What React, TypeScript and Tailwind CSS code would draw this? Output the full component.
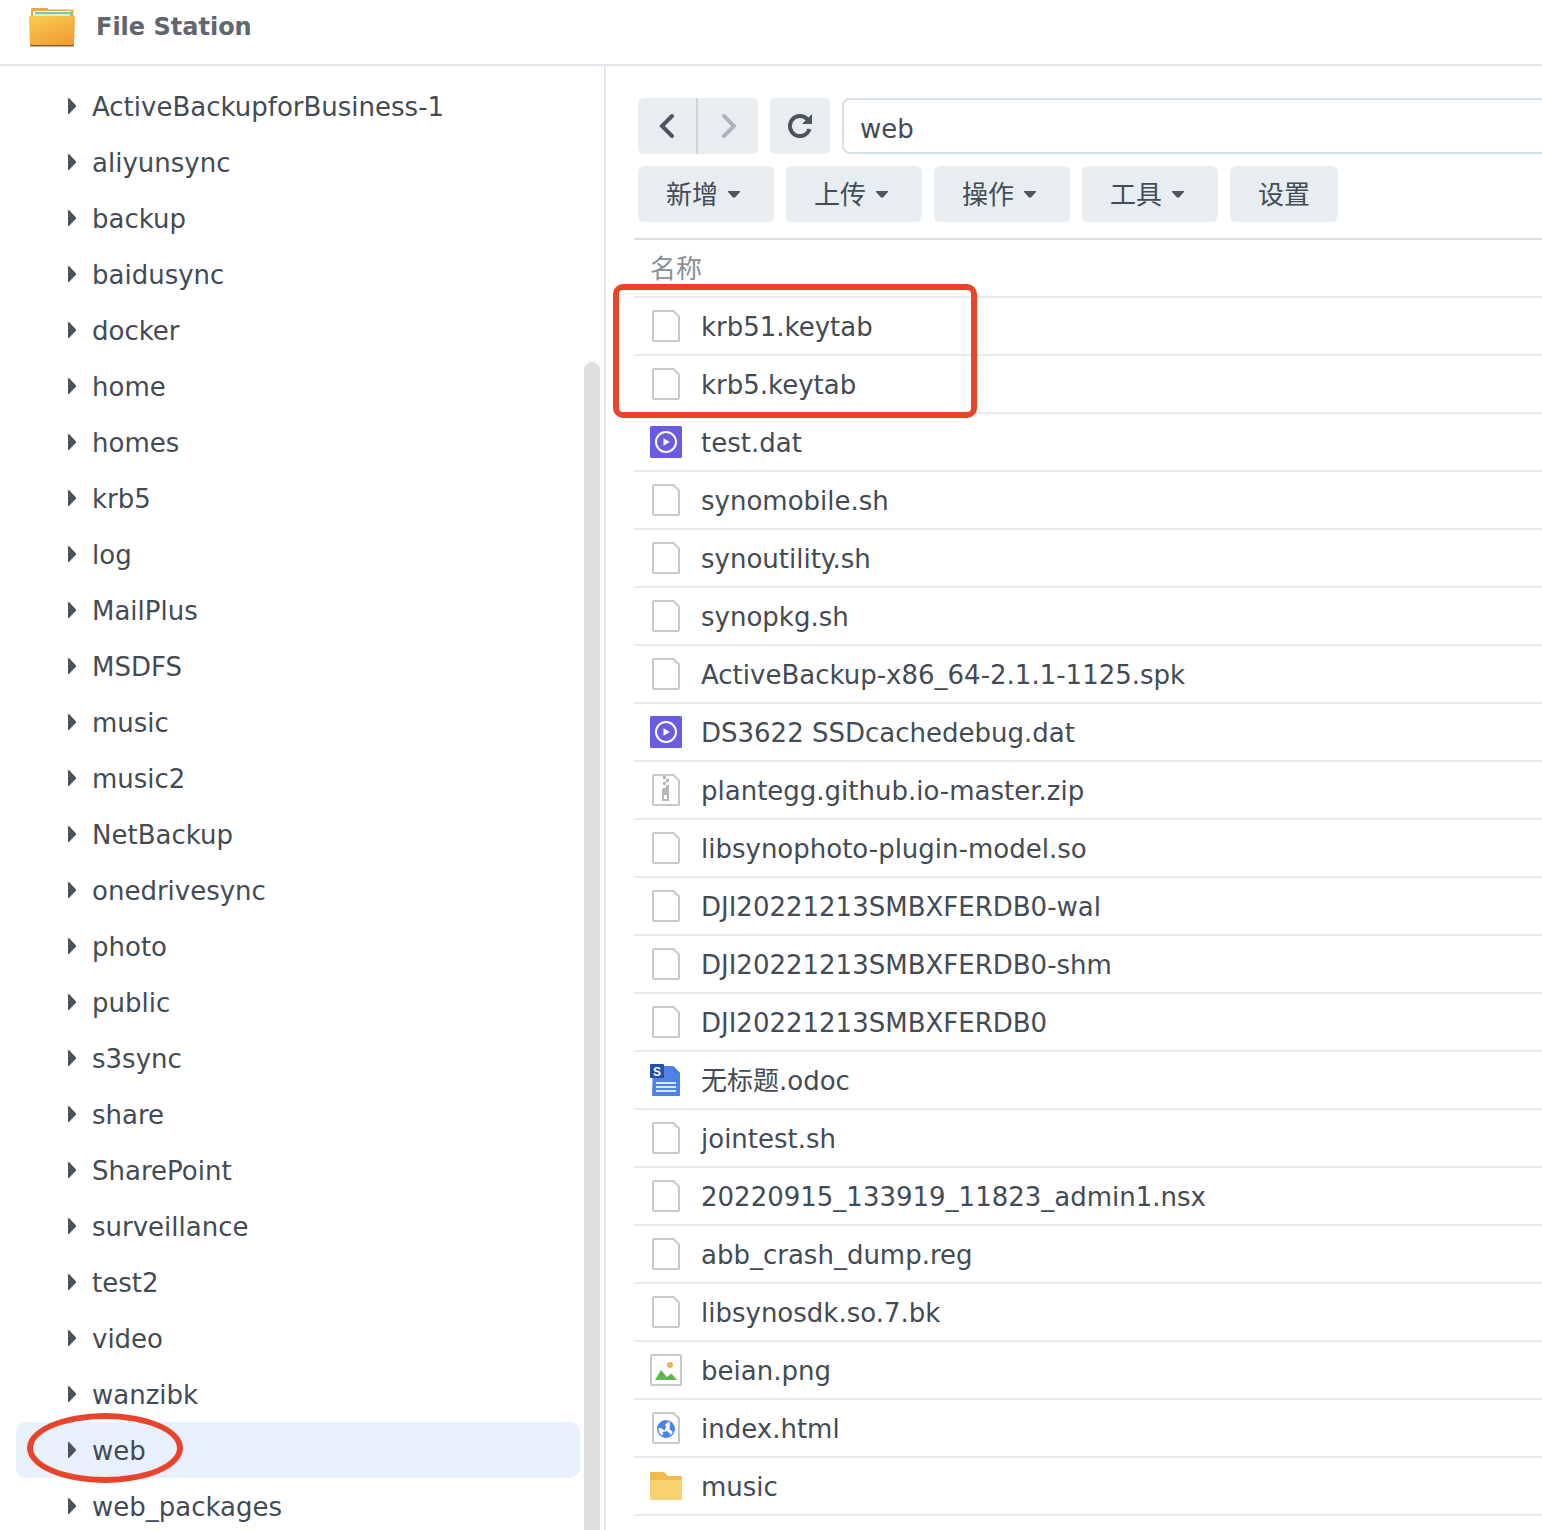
import type { ReactNode } from "react"

type IconKind = "file" | "media" | "zip" | "doc" | "image" | "html" | "folder"

const folders = [
  "ActiveBackupforBusiness-1",
  "aliyunsync",
  "backup",
  "baidusync",
  "docker",
  "home",
  "homes",
  "krb5",
  "log",
  "MailPlus",
  "MSDFS",
  "music",
  "music2",
  "NetBackup",
  "onedrivesync",
  "photo",
  "public",
  "s3sync",
  "share",
  "SharePoint",
  "surveillance",
  "test2",
  "video",
  "wanzibk",
  "web",
  "web_packages",
]

const files: { name: string; icon: IconKind }[] = [
  { name: "krb51.keytab", icon: "file" },
  { name: "krb5.keytab", icon: "file" },
  { name: "test.dat", icon: "media" },
  { name: "synomobile.sh", icon: "file" },
  { name: "synoutility.sh", icon: "file" },
  { name: "synopkg.sh", icon: "file" },
  { name: "ActiveBackup-x86_64-2.1.1-1125.spk", icon: "file" },
  { name: "DS3622 SSDcachedebug.dat", icon: "media" },
  { name: "plantegg.github.io-master.zip", icon: "zip" },
  { name: "libsynophoto-plugin-model.so", icon: "file" },
  { name: "DJI20221213SMBXFERDB0-wal", icon: "file" },
  { name: "DJI20221213SMBXFERDB0-shm", icon: "file" },
  { name: "DJI20221213SMBXFERDB0", icon: "file" },
  { name: "无标题.odoc", icon: "doc" },
  { name: "jointest.sh", icon: "file" },
  { name: "20220915_133919_11823_admin1.nsx", icon: "file" },
  { name: "abb_crash_dump.reg", icon: "file" },
  { name: "libsynosdk.so.7.bk", icon: "file" },
  { name: "beian.png", icon: "image" },
  { name: "index.html", icon: "html" },
  { name: "music", icon: "folder" },
]

const menus = ["新增", "上传", "操作", "工具"]

function Page() {
  return (
    <path
      d="M4 1h19.500L29 6.500V30a1 1 0 0 1-1 1H4a1 1 0 0 1-1-1V2a1 1 0 0 1 1-1z"
      fill="#fff"
      stroke="#c6c8cc"
      strokeWidth="2"
    />
  )
}

const iconShapes: Record<IconKind, ReactNode> = {
  file: <Page />,
  media: (
    <>
      <rect width="32" height="32" rx="1.500" fill="#6a5ce2" />
      <circle cx="16" cy="16" r="10" fill="none" stroke="#fff" strokeWidth="2" />
      <path d="M13.500 12.200v7.600l6.300-3.800z" fill="#fff" />
    </>
  ),
  zip: (
    <>
      <Page />
      <path d="M13 2h3v3h-3zM16 5h3v3h-3zM13 8h3v3h-3zM16 11h3v3h-3z" fill="#b3b6ba" />
      <path d="M12 16a2 2 0 0 1 2-2h5v13h-7zM14 21v4h3v-4z" fill="#b3b6ba" fillRule="evenodd" />
    </>
  ),
  doc: (
    <>
      <path d="M3 2h20l7 7v22a1 1 0 0 1-1 1H3a1 1 0 0 1-1-1z" fill="#4f83e8" />
      <path d="M23 2l7 7h-6a1 1 0 0 1-1-1z" fill="#447ae2" />
      <path d="M6 19h20M6 23h20M6 27h20" stroke="#dbe7fb" strokeWidth="2" />
      <rect width="14" height="14" rx="1" fill="#2450a6" />
      <text x="7" y="11.500" fontSize="12" fontWeight="700" fill="#fff" textAnchor="middle" className="font-['Liberation_Sans',sans-serif]">
        S
      </text>
    </>
  ),
  image: (
    <>
      <rect x="1" y="1" width="30" height="30" rx="1" fill="#fff" stroke="#c6c8cc" strokeWidth="2" />
      <circle cx="20" cy="11" r="3" fill="#f0b04a" />
      <path d="M5 26l6-10 6 7 4.500-3.500L27 26z" fill="#5fb74e" />
    </>
  ),
  html: (
    <>
      <Page />
      <circle cx="16" cy="17" r="8.300" fill="#fff" stroke="#4a82ee" strokeWidth="1.400" />
      <path d="M8 16c0-4.500 4-7.600 8-7.600l2 1.600-3 3 1 2-1.500 3.500L11 16z" fill="#4a82ee" />
      <path d="M20 10l3 2c1.500 3 1.500 6 0 8.500L19.500 17z" fill="#4a82ee" />
      <path d="M13 20l4-1 3.500 3-1.500 2.500c-2 1-4.500 1-6.500 0z" fill="#4a82ee" />
    </>
  ),
  folder: (
    <>
      <path d="M1 2h13l4 4h13a1 1 0 0 1 1 1v6H0V3a1 1 0 0 1 1-1z" fill="#f0bb50" />
      <path d="M0 10h32v19a1 1 0 0 1-1 1H1a1 1 0 0 1-1-1z" fill="#f8d270" />
    </>
  ),
}

function FileIcon({ kind }: { kind: IconKind }) {
  return (
    <svg viewBox="0 0 32 32" className="size-8 shrink-0" aria-hidden="true">
      {iconShapes[kind]}
    </svg>
  )
}

function AppLogo() {
  return (
    <svg viewBox="0 0 48 42" className="h-[42px] w-12" aria-hidden="true">
      <defs>
        <linearGradient id="front" x1="0" y1="0" x2="0.600" y2="1">
          <stop offset="0" stopColor="#f7cd50" />
          <stop offset="1" stopColor="#f2a035" />
        </linearGradient>
      </defs>
      <path d="M3 12V3.500A1.500 1.500 0 0 1 4.500 2H19l2 1.500h23A1.500 1.500 0 0 1 45.500 5v7z" fill="#eda63a" />
      <path d="M5 5h38v6H5z" fill="#fff" />
      <path d="M7 6h36v5H7z" fill="#7fc79a" />
      <path d="M6 8h36v3H6z" fill="#d5eedb" />
      <path d="M2 36h44v3a1.500 1.500 0 0 1-1.500 1.500h-41A1.500 1.500 0 0 1 2 39z" fill="#8a5a2a" />
      <path d="M2.500 10h43A1.500 1.500 0 0 1 47 11.500L46 37.500a1.500 1.500 0 0 1-1.500 1.500h-41A1.500 1.500 0 0 1 2 37.500L1 11.500A1.500 1.500 0 0 1 2.500 10z" fill="url(#front)" />
    </svg>
  )
}

function Sidebar() {
  return (
    <nav className="flex w-[606px] shrink-0 border-r-2 border-[#e1e6ec] pr-1 pl-4">
      <ul className="flex-1 pt-3">
        {folders.map((name) => (
          <li key={name} className="relative">
            <button
              className={
                name === "web"
                  ? "flex h-14 w-full items-center gap-4 rounded-[10px] bg-[#e8f1fb] pl-[51px] text-left"
                  : "flex h-14 w-full items-center gap-4 pl-[51px] text-left"
              }
            >
              <svg viewBox="0 0 9 16" className="h-4 w-[9px]" aria-hidden="true">
                <path d="M1 0h1l7 7.500v1L2 16H1z" fill="#4a525c" />
              </svg>
              <span className="pt-0.5">{name}</span>
            </button>
            {name === "web" && (
              <div className="pointer-events-none absolute -top-[9px] left-[11px] h-[70px] w-[156px] rounded-[50%] border-6 border-[#e8432b]" />
            )}
          </li>
        ))}
      </ul>
      <div className="mt-[296px] ml-1 w-4 rounded-t-full bg-[#dfdfdf]" />
    </nav>
  )
}

function Toolbar() {
  return (
    <div className="space-y-3 pb-4 pl-1">
      <div className="flex gap-3">
        <div className="flex overflow-hidden rounded-md bg-[#e8edf2]">
          <button aria-label="Back" className="flex h-14 w-[60px] items-center justify-center border-r-2 border-[#cbd5e0]">
            <svg viewBox="0 0 16 26" className="h-[26px] w-4" fill="none" stroke="#4c545e" strokeWidth="4">
              <path d="M13 3L3 13l10 10" strokeLinecap="round" />
            </svg>
          </button>
          <button aria-label="Forward" className="flex h-14 w-[60px] items-center justify-center">
            <svg viewBox="0 0 16 26" className="h-[26px] w-4" fill="none" stroke="#adb3ba" strokeWidth="4">
              <path d="M4 3l10 10L4 23" strokeLinecap="round" />
            </svg>
          </button>
        </div>
        <button aria-label="Refresh" className="flex h-14 w-[60px] items-center justify-center rounded-md bg-[#e8edf2]">
          <svg viewBox="0 0 24 24" className="size-6">
            <path d="M19.500 5.500A10 10 0 1 0 21.500 15" fill="none" stroke="#4c545e" strokeWidth="4" />
            <path d="M24 0v10H14z" fill="#4c545e" />
          </svg>
        </button>
        <input
          aria-label="Path"
          defaultValue="web"
          className="h-14 min-w-0 flex-1 rounded-l-lg border-2 border-r-0 border-[#d8e0e8] px-4 pt-1.5 outline-none"
        />
      </div>
      <div className="flex gap-3">
        {menus.map((label) => (
          <button key={label} className="flex h-14 items-center gap-2.5 rounded-md bg-[#e8edf2] px-7">
            <span className="pt-0.5">{label}</span>
            <svg viewBox="0 0 12 7" className="mr-1.5 h-[7px] w-3" aria-hidden="true">
              <path d="M0 0h12v1L7 6.500H5L0 1z" fill="#4c545e" />
            </svg>
          </button>
        ))}
        <button className="h-14 rounded-md bg-[#e8edf2] px-7 pt-0.5">设置</button>
      </div>
    </div>
  )
}

function FileTable() {
  return (
    <div className="relative border-t-2 border-[#d8e0e6]">
      <table className="w-full border-separate border-spacing-0">
        <thead>
          <tr>
            <th className="h-[58px] border-b-2 border-[#e6ebf0] p-0 pt-0.5 pl-4 text-left font-normal text-[#8b9096]">
              名称
            </th>
          </tr>
        </thead>
        <tbody>
          {files.map((file) => (
            <tr key={file.name}>
              <td className="h-[58px] border-b-2 border-[#e6ebf0] p-0 pl-4">
                <div className="flex items-center gap-[19px]">
                  <FileIcon kind={file.icon} />
                  <span className="pt-0.5 whitespace-nowrap">{file.name}</span>
                </div>
              </td>
            </tr>
          ))}
        </tbody>
      </table>
      <div className="pointer-events-none absolute top-11 -left-[21px] h-[134px] w-[364px] rounded-[10px] border-6 border-[#e8432b]" />
    </div>
  )
}

export default function App() {
  return (
    <div className="flex h-screen flex-col overflow-hidden bg-white font-['DejaVu_Sans','Noto_Sans_CJK_SC',sans-serif] text-[26px] leading-8 text-[#434b55]">
      <header className="flex h-[66px] shrink-0 items-start gap-5 border-b-2 border-[#e1e6ec] pt-1.5 pl-7">
        <AppLogo />
        <h1 className="pt-1 text-2xl leading-[34px] font-bold text-[#5f666e]">File Station</h1>
      </header>
      <div className="flex min-h-0 flex-1">
        <Sidebar />
        <main className="min-w-0 flex-1 pt-8 pl-7">
          <Toolbar />
          <FileTable />
        </main>
      </div>
    </div>
  )
}
